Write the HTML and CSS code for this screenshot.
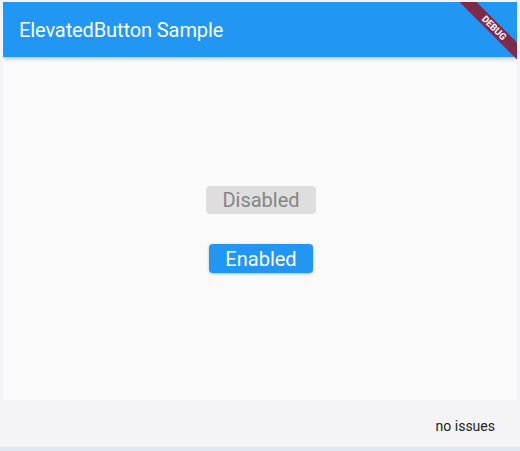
FILE: index.html
```html
<!DOCTYPE html>
<html>
<head>
<meta charset="utf-8">
<link rel="stylesheet" href="styles.css">
</head>
<body>
<div class="frame">
  <header class="appbar"><span class="title">ElevatedButton Sample</span></header>
  <main class="content">
    <button class="btn btn-disabled" disabled>Disabled</button>
    <button class="btn btn-enabled">Enabled</button>
  </main>
  <div class="banner"><span>DEBUG</span></div>
</div>
<footer class="status"><span>no issues</span></footer>
<div class="bottom-line"></div>
</body>
</html>
```
FILE: styles.css
```css
html, body {
  margin: 0;
  padding: 0;
}
body {
  width: 520px;
  height: 451px;
  overflow: hidden;
  background: #f4f4f6;
  font-family: Roboto, "Liberation Sans", sans-serif;
  display: flex;
  flex-direction: column;
}
.frame {
  margin: 2px 3px 0 3px;
  height: 398px;
  background: #fafafa;
  position: relative;
  overflow: hidden;
  display: flex;
  flex-direction: column;
}
.appbar {
  height: 55px;
  flex: none;
  background: #2196f3;
  display: flex;
  align-items: center;
  padding-left: 16px;
  box-shadow: 0 2px 4px rgba(0,0,0,0.22);
  position: relative;
  z-index: 1;
}
.title {
  color: #fff;
  font-size: 20px;
  font-weight: 400;
  letter-spacing: -0.1px;
}
.content {
  flex: 1;
  display: flex;
  flex-direction: column;
  align-items: center;
  justify-content: center;
  gap: 30px;
  padding-top: 2px;
  padding-left: 2px;
}
.btn {
  font-family: Roboto, "Liberation Sans", sans-serif;
  font-size: 20px;
  height: 28px;
  line-height: 28px;
  padding: 0 16px;
  border: none;
  border-radius: 4px;
  margin: 0;
}
.btn-disabled {
  background: #dedede;
  color: #858585;
}
.btn-enabled {
  background: #2196f3;
  color: #fff;
  height: 29px;
  box-shadow: 0 1px 3px rgba(0,0,0,0.25);
}
.banner {
  position: absolute;
  z-index: 2;
  width: 120px;
  height: 12px;
  left: 431px;
  top: 20px;
  transform: rotate(45deg);
  background: #7c2b4a;
  display: flex;
  align-items: center;
  justify-content: center;
}
.banner span {
  color: #fff;
  font-size: 9.5px;
  font-weight: 700;
  line-height: 12px;
  letter-spacing: 0;
}
.status {
  height: 47px;
  flex: none;
  display: flex;
  align-items: center;
  justify-content: flex-end;
  padding-right: 25px;
  font-size: 14px;
  color: #222;
}
.status span {
  position: relative;
  top: 2px;
}
.bottom-line {
  height: 2px;
  background: #e6e6e8;
  border-bottom: 2px solid #dcebf8;
  flex: none;
}
```
